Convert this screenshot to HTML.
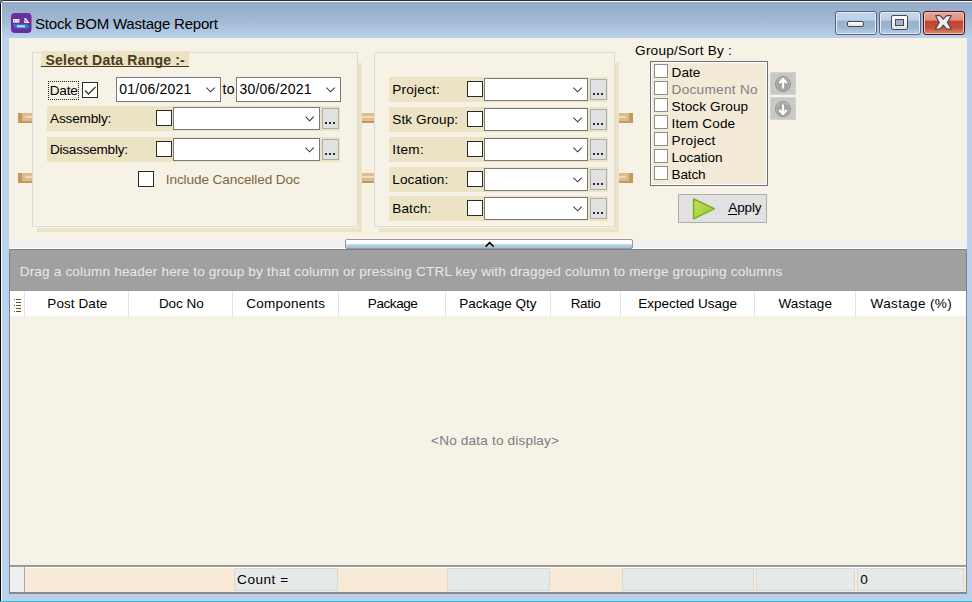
<!DOCTYPE html>
<html><head><meta charset="utf-8">
<style>
*{box-sizing:border-box;margin:0;padding:0}
html,body{width:972px;height:602px;overflow:hidden;background:#b9d1ea;font-family:"Liberation Sans",sans-serif;font-size:13px;color:#000}
.a{position:absolute}
.t{position:absolute;white-space:pre;line-height:1}
</style></head><body>
<div class="a" style="left:0px;top:0px;width:972px;height:602px;background:#b9d1ea;"></div>
<div class="a" style="left:2px;top:2px;width:970px;height:36px;background:linear-gradient(#94abc8 0%,#9fb6d2 45%,#a6bdd8 62%,#b2cae5 85%,#bad2ec 100%);"></div>
<div class="a" style="left:0px;top:0px;width:972px;height:1px;background:#2b2b2b;"></div>
<div class="a" style="left:0px;top:0px;width:1px;height:602px;background:#0c0c0c;"></div>
<div class="a" style="left:1px;top:1px;width:971px;height:1px;background:#f8fbff;"></div>
<div class="a" style="left:1px;top:1px;width:1px;height:601px;background:#f8fbff;"></div>
<div class="a" style="left:0px;top:0px;width:3px;height:3px;background:#6a6a6a;border-bottom-right-radius:3px"></div>
<div class="a" style="left:0px;top:601px;width:972px;height:1px;background:#1ec3dc;"></div>
<svg class="a" style="left:11px;top:13px" width="21" height="20" viewBox="0 0 21 20">
<rect x="0" y="0" width="20.5" height="20" rx="4" fill="#6a2f9a"/>
<rect x="2" y="6" width="3" height="3.6" fill="#f4f0f8"/><rect x="3" y="7" width="1" height="1.6" fill="#9a78c0"/>
<rect x="5" y="6" width="3.4" height="3.6" fill="#f4f0f8"/><rect x="6" y="7" width="1.4" height="1.4" fill="#b8a0d8"/>
<path d="M13.2 10 L13.6 5 L14.8 5 L18.6 10 Z" fill="#f4f0f8"/><path d="M14.3 6.8 L16.4 9 L14.3 9 Z" fill="#8a60b8"/>
<path d="M1.8 11.2 L16.6 11.2 L18.2 15.2 L4.2 15.2 Z" fill="#1f84d6"/>
<rect x="6" y="12.2" width="8" height="2.2" fill="#b9dcf6"/>
</svg>
<div class="t" style="left:35.00px;top:16.30px;font-size:15px;letter-spacing:-0.212px;color:#000;">Stock BOM Wastage Report</div>
<div class="a" style="left:835px;top:11px;width:42px;height:24px;background:linear-gradient(#c3d7ec 0,#bad0e7 38%,#97b1cc 40%,#9db6d0 70%,#b7cee6 100%);border:1px solid #58657f;border-radius:3px;box-shadow:inset 0 0 0 1px #e3ecf6"></div>
<div class="a" style="left:879px;top:11px;width:42px;height:24px;background:linear-gradient(#c3d7ec 0,#bad0e7 38%,#97b1cc 40%,#9db6d0 70%,#b7cee6 100%);border:1px solid #58657f;border-radius:3px;box-shadow:inset 0 0 0 1px #e3ecf6"></div>
<div class="a" style="left:847px;top:21px;width:17px;height:6px;background:linear-gradient(#ffffff,#e4e4e4);border:1px solid #444a5c;border-radius:2px"></div>
<div class="a" style="left:891px;top:15px;width:17px;height:15px;background:linear-gradient(#ffffff,#e4e4e4);border:1px solid #444a5c;border-radius:2px"></div>
<div class="a" style="left:895px;top:19px;width:9px;height:7px;background:#9eb6cf;border:1px solid #444a5c"></div>
<div class="a" style="left:923px;top:11px;width:42px;height:24px;background:linear-gradient(#eaa898 0,#de8e7a 38%,#c0432a 40%,#c54e34 70%,#dc8a75 100%);border:1px solid #4a1222;border-radius:3px;box-shadow:inset 0 0 0 1px #f0c0b0"></div>
<svg class="a" style="left:934px;top:14px" width="20" height="18" viewBox="0 0 20 18">
<path d="M1.6 1.8 Q1.4 1.6 1.9 1.6 L6 1.6 L9.3 5.2 L12.7 1.6 L16.8 1.6 Q17.3 1.6 17.1 1.9 L13.4 8.5 L17.2 14.6 Q17.3 15 16.9 15 L12.7 15 L9.3 11.2 L6 15 L1.8 15 Q1.3 15 1.5 14.6 L5.3 8.5 Z" fill="#ededed" stroke="#39405a" stroke-width="1.1" stroke-linejoin="round"/>
</svg>
<div class="a" style="left:9px;top:38px;width:958px;height:201px;background:#f6f2e6;"></div>
<div class="a" style="left:9px;top:239px;width:958px;height:9px;background:#f0f0f0;"></div>
<div class="a" style="left:9px;top:248px;width:958px;height:1px;background:#fcfcfc;"></div>
<div class="a" style="left:358px;top:63px;width:4px;height:169px;background:#ebe3c4;"></div>
<div class="a" style="left:37px;top:228px;width:325px;height:4px;background:#ebe3c4;"></div>
<div class="a" style="left:32px;top:52px;width:326px;height:175px;background:transparent;border:1px solid #d9dbdf"></div>
<div class="a" style="left:615px;top:63px;width:4px;height:169px;background:#ebe3c4;"></div>
<div class="a" style="left:379px;top:228px;width:240px;height:4px;background:#ebe3c4;"></div>
<div class="a" style="left:374px;top:52px;width:241px;height:175px;background:transparent;border:1px solid #d9dbdf"></div>
<div class="a" style="left:18px;top:113px;width:14px;height:10px;background:#c49a56;"></div>
<div class="a" style="left:22px;top:113px;width:10px;height:8px;background:#dbbb94;"></div>
<div class="a" style="left:25px;top:116px;width:7px;height:2px;background:#ecdcb3;"></div>
<div class="a" style="left:619px;top:113px;width:14px;height:10px;background:#c49a56;"></div>
<div class="a" style="left:619px;top:113px;width:10px;height:8px;background:#dbbb94;"></div>
<div class="a" style="left:619px;top:116px;width:7px;height:2px;background:#ecdcb3;"></div>
<div class="a" style="left:362px;top:113px;width:12px;height:10px;background:#dcbc95;"></div>
<div class="a" style="left:362px;top:116px;width:12px;height:2px;background:#ecdcb3;"></div>
<div class="a" style="left:362px;top:121px;width:12px;height:2px;background:#c49a56;"></div>
<div class="a" style="left:18px;top:173px;width:14px;height:10px;background:#c49a56;"></div>
<div class="a" style="left:22px;top:173px;width:10px;height:8px;background:#dbbb94;"></div>
<div class="a" style="left:25px;top:176px;width:7px;height:2px;background:#ecdcb3;"></div>
<div class="a" style="left:619px;top:173px;width:14px;height:10px;background:#c49a56;"></div>
<div class="a" style="left:619px;top:173px;width:10px;height:8px;background:#dbbb94;"></div>
<div class="a" style="left:619px;top:176px;width:7px;height:2px;background:#ecdcb3;"></div>
<div class="a" style="left:362px;top:173px;width:12px;height:10px;background:#dcbc95;"></div>
<div class="a" style="left:362px;top:176px;width:12px;height:2px;background:#ecdcb3;"></div>
<div class="a" style="left:362px;top:181px;width:12px;height:2px;background:#c49a56;"></div>
<div class="a" style="left:41px;top:51px;width:148px;height:15px;background:#ebe3c4;"></div>
<div class="a" style="left:41px;top:66px;width:148px;height:1px;background:#4a3818;"></div>
<div class="t" style="left:45.50px;top:53.15px;font-size:14px;letter-spacing:0.206px;color:#4a3a1e;font-weight:bold;">Select Data Range :-</div>
<div class="a" style="left:48px;top:81px;width:31px;height:19px;background:transparent;border:1px dotted #222"></div>
<div class="t" style="left:49.70px;top:83.89px;font-size:13.6px;letter-spacing:-0.165px;color:#000;">Date</div>
<div class="a" style="left:82px;top:82px;width:16px;height:16px;background:#fff;border:1px solid #2a2a2a"></div>
<svg class="a" style="left:82px;top:82px" width="16" height="16" viewBox="0 0 16 16"><path d="M3 8.5 L6.5 12 L13.5 5" fill="none" stroke="#3a3a3a" stroke-width="1.4"/></svg>
<div class="a" style="left:116px;top:77px;width:105px;height:25px;background:#fff;border:1px solid #7a7a7a"></div>
<svg class="a" style="left:206px;top:87px" width="10" height="6" viewBox="0 0 10 6"><path d="M0.4 0.6 L4.6 4.8 L8.8 0.6" fill="none" stroke="#3a3a3a" stroke-width="1.05"/></svg>
<div class="t" style="left:119.30px;top:82.15px;font-size:14px;letter-spacing:0.214px;color:#000;">01/06/2021</div>
<div class="t" style="left:222.50px;top:82.15px;font-size:14px;letter-spacing:0.310px;color:#000;">to</div>
<div class="a" style="left:236px;top:77px;width:105px;height:25px;background:#fff;border:1px solid #7a7a7a"></div>
<svg class="a" style="left:326px;top:87px" width="10" height="6" viewBox="0 0 10 6"><path d="M0.4 0.6 L4.6 4.8 L8.8 0.6" fill="none" stroke="#3a3a3a" stroke-width="1.05"/></svg>
<div class="t" style="left:239.50px;top:82.15px;font-size:14px;letter-spacing:0.214px;color:#000;">30/06/2021</div>
<div class="a" style="left:47px;top:106px;width:293px;height:25px;background:#ebe3c4;"></div>
<div class="t" style="left:50.00px;top:112.29px;font-size:13.6px;letter-spacing:-0.175px;color:#000;">Assembly:</div>
<div class="a" style="left:156px;top:110px;width:16px;height:16px;background:#fff;border:1px solid #2a2a2a"></div>
<div class="a" style="left:173px;top:107px;width:147px;height:23px;background:#fff;border:1px solid #7a7a7a"></div>
<svg class="a" style="left:305px;top:116px" width="10" height="6" viewBox="0 0 10 6"><path d="M0.4 0.6 L4.6 4.8 L8.8 0.6" fill="none" stroke="#3a3a3a" stroke-width="1.05"/></svg>
<div class="a" style="left:322px;top:108px;width:17px;height:21px;background:#e1e1e1;border:1px solid #adadad"></div>
<div class="a" style="left:325px;top:122px;width:2px;height:2px;background:#2a2a48;"></div>
<div class="a" style="left:329px;top:122px;width:2px;height:2px;background:#2a2a48;"></div>
<div class="a" style="left:333px;top:122px;width:2px;height:2px;background:#2a2a48;"></div>
<div class="a" style="left:47px;top:137px;width:293px;height:25px;background:#ebe3c4;"></div>
<div class="t" style="left:50.00px;top:143.29px;font-size:13.6px;letter-spacing:-0.259px;color:#000;">Disassembly:</div>
<div class="a" style="left:156px;top:141px;width:16px;height:16px;background:#fff;border:1px solid #2a2a2a"></div>
<div class="a" style="left:173px;top:138px;width:147px;height:23px;background:#fff;border:1px solid #7a7a7a"></div>
<svg class="a" style="left:305px;top:147px" width="10" height="6" viewBox="0 0 10 6"><path d="M0.4 0.6 L4.6 4.8 L8.8 0.6" fill="none" stroke="#3a3a3a" stroke-width="1.05"/></svg>
<div class="a" style="left:322px;top:139px;width:17px;height:21px;background:#e1e1e1;border:1px solid #adadad"></div>
<div class="a" style="left:325px;top:153px;width:2px;height:2px;background:#2a2a48;"></div>
<div class="a" style="left:329px;top:153px;width:2px;height:2px;background:#2a2a48;"></div>
<div class="a" style="left:333px;top:153px;width:2px;height:2px;background:#2a2a48;"></div>
<div class="a" style="left:138px;top:171px;width:16px;height:16px;background:#fff;border:1px solid #2a2a2a"></div>
<div class="t" style="left:165.80px;top:173.19px;font-size:13.6px;letter-spacing:-0.103px;color:#80663f;">Include Cancelled Doc</div>
<div class="a" style="left:389px;top:77px;width:219px;height:25px;background:#ebe3c4;"></div>
<div class="t" style="left:392.30px;top:83.29px;font-size:13.6px;letter-spacing:0.199px;color:#000;">Project:</div>
<div class="a" style="left:467px;top:81px;width:16px;height:16px;background:#fff;border:1px solid #2a2a2a"></div>
<div class="a" style="left:484px;top:78px;width:104px;height:23px;background:#fff;border:1px solid #7a7a7a"></div>
<svg class="a" style="left:573px;top:87px" width="10" height="6" viewBox="0 0 10 6"><path d="M0.4 0.6 L4.6 4.8 L8.8 0.6" fill="none" stroke="#3a3a3a" stroke-width="1.05"/></svg>
<div class="a" style="left:590px;top:79px;width:17px;height:21px;background:#e1e1e1;border:1px solid #adadad"></div>
<div class="a" style="left:593px;top:93px;width:2px;height:2px;background:#2a2a48;"></div>
<div class="a" style="left:597px;top:93px;width:2px;height:2px;background:#2a2a48;"></div>
<div class="a" style="left:601px;top:93px;width:2px;height:2px;background:#2a2a48;"></div>
<div class="a" style="left:389px;top:107px;width:219px;height:25px;background:#ebe3c4;"></div>
<div class="t" style="left:392.30px;top:113.29px;font-size:13.6px;letter-spacing:0.088px;color:#000;">Stk Group:</div>
<div class="a" style="left:467px;top:111px;width:16px;height:16px;background:#fff;border:1px solid #2a2a2a"></div>
<div class="a" style="left:484px;top:108px;width:104px;height:23px;background:#fff;border:1px solid #7a7a7a"></div>
<svg class="a" style="left:573px;top:117px" width="10" height="6" viewBox="0 0 10 6"><path d="M0.4 0.6 L4.6 4.8 L8.8 0.6" fill="none" stroke="#3a3a3a" stroke-width="1.05"/></svg>
<div class="a" style="left:590px;top:109px;width:17px;height:21px;background:#e1e1e1;border:1px solid #adadad"></div>
<div class="a" style="left:593px;top:123px;width:2px;height:2px;background:#2a2a48;"></div>
<div class="a" style="left:597px;top:123px;width:2px;height:2px;background:#2a2a48;"></div>
<div class="a" style="left:601px;top:123px;width:2px;height:2px;background:#2a2a48;"></div>
<div class="a" style="left:389px;top:137px;width:219px;height:25px;background:#ebe3c4;"></div>
<div class="t" style="left:392.30px;top:143.29px;font-size:13.6px;letter-spacing:0.310px;color:#000;">Item:</div>
<div class="a" style="left:467px;top:141px;width:16px;height:16px;background:#fff;border:1px solid #2a2a2a"></div>
<div class="a" style="left:484px;top:138px;width:104px;height:23px;background:#fff;border:1px solid #7a7a7a"></div>
<svg class="a" style="left:573px;top:147px" width="10" height="6" viewBox="0 0 10 6"><path d="M0.4 0.6 L4.6 4.8 L8.8 0.6" fill="none" stroke="#3a3a3a" stroke-width="1.05"/></svg>
<div class="a" style="left:590px;top:139px;width:17px;height:21px;background:#e1e1e1;border:1px solid #adadad"></div>
<div class="a" style="left:593px;top:153px;width:2px;height:2px;background:#2a2a48;"></div>
<div class="a" style="left:597px;top:153px;width:2px;height:2px;background:#2a2a48;"></div>
<div class="a" style="left:601px;top:153px;width:2px;height:2px;background:#2a2a48;"></div>
<div class="a" style="left:389px;top:167px;width:219px;height:25px;background:#ebe3c4;"></div>
<div class="t" style="left:392.30px;top:173.29px;font-size:13.6px;letter-spacing:0.098px;color:#000;">Location:</div>
<div class="a" style="left:467px;top:171px;width:16px;height:16px;background:#fff;border:1px solid #2a2a2a"></div>
<div class="a" style="left:484px;top:168px;width:104px;height:23px;background:#fff;border:1px solid #7a7a7a"></div>
<svg class="a" style="left:573px;top:177px" width="10" height="6" viewBox="0 0 10 6"><path d="M0.4 0.6 L4.6 4.8 L8.8 0.6" fill="none" stroke="#3a3a3a" stroke-width="1.05"/></svg>
<div class="a" style="left:590px;top:169px;width:17px;height:21px;background:#e1e1e1;border:1px solid #adadad"></div>
<div class="a" style="left:593px;top:183px;width:2px;height:2px;background:#2a2a48;"></div>
<div class="a" style="left:597px;top:183px;width:2px;height:2px;background:#2a2a48;"></div>
<div class="a" style="left:601px;top:183px;width:2px;height:2px;background:#2a2a48;"></div>
<div class="a" style="left:389px;top:196px;width:219px;height:25px;background:#ebe3c4;"></div>
<div class="t" style="left:392.30px;top:202.29px;font-size:13.6px;letter-spacing:0.089px;color:#000;">Batch:</div>
<div class="a" style="left:467px;top:200px;width:16px;height:16px;background:#fff;border:1px solid #2a2a2a"></div>
<div class="a" style="left:484px;top:197px;width:104px;height:23px;background:#fff;border:1px solid #7a7a7a"></div>
<svg class="a" style="left:573px;top:206px" width="10" height="6" viewBox="0 0 10 6"><path d="M0.4 0.6 L4.6 4.8 L8.8 0.6" fill="none" stroke="#3a3a3a" stroke-width="1.05"/></svg>
<div class="a" style="left:590px;top:198px;width:17px;height:21px;background:#e1e1e1;border:1px solid #adadad"></div>
<div class="a" style="left:593px;top:212px;width:2px;height:2px;background:#2a2a48;"></div>
<div class="a" style="left:597px;top:212px;width:2px;height:2px;background:#2a2a48;"></div>
<div class="a" style="left:601px;top:212px;width:2px;height:2px;background:#2a2a48;"></div>
<div class="t" style="left:635.10px;top:44.49px;font-size:13.6px;letter-spacing:0.214px;color:#000;">Group/Sort By :</div>
<div class="a" style="left:650px;top:61px;width:118px;height:125px;background:#f3ebd8;border:1px solid #6d707a;box-shadow:inset 1px 1px 0 #fff, inset -1px -1px 0 #fff"></div>
<div class="a" style="left:654px;top:64px;width:14px;height:14px;background:#fff;border:1px solid #8d8d8d"></div>
<div class="t" style="left:671.60px;top:65.79px;font-size:13.6px;letter-spacing:-0.032px;color:#000;">Date</div>
<div class="a" style="left:654px;top:81px;width:14px;height:14px;background:#fff;border:1px solid #8d8d8d"></div>
<div class="t" style="left:671.60px;top:82.79px;font-size:13.6px;letter-spacing:0.284px;color:#80808a;">Document No</div>
<div class="a" style="left:654px;top:98px;width:14px;height:14px;background:#fff;border:1px solid #8d8d8d"></div>
<div class="t" style="left:671.60px;top:99.79px;font-size:13.6px;letter-spacing:0.098px;color:#000;">Stock Group</div>
<div class="a" style="left:654px;top:115px;width:14px;height:14px;background:#fff;border:1px solid #8d8d8d"></div>
<div class="t" style="left:671.60px;top:116.79px;font-size:13.6px;letter-spacing:0.105px;color:#000;">Item Code</div>
<div class="a" style="left:654px;top:132px;width:14px;height:14px;background:#fff;border:1px solid #8d8d8d"></div>
<div class="t" style="left:671.60px;top:133.79px;font-size:13.6px;letter-spacing:0.217px;color:#000;">Project</div>
<div class="a" style="left:654px;top:149px;width:14px;height:14px;background:#fff;border:1px solid #8d8d8d"></div>
<div class="t" style="left:671.60px;top:150.79px;font-size:13.6px;letter-spacing:-0.058px;color:#000;">Location</div>
<div class="a" style="left:654px;top:166px;width:14px;height:14px;background:#fff;border:1px solid #8d8d8d"></div>
<div class="t" style="left:671.60px;top:167.79px;font-size:13.6px;letter-spacing:-0.187px;color:#000;">Batch</div>
<div class="a" style="left:770px;top:72px;width:26px;height:23px;background:#c8c8c8;border:1px solid #d3d3d3"></div>
<svg class="a" style="left:775px;top:76px" width="16" height="16" viewBox="0 0 16 16"><defs><linearGradient id="g72" x1="0" y1="0" x2="0" y2="1"><stop offset="0" stop-color="#c4c4c4"/><stop offset="1" stop-color="#a8a8a8"/></linearGradient></defs><circle cx="8" cy="8" r="7.5" fill="url(#g72)" stroke="#8f8f8f" stroke-width="1"/><circle cx="8" cy="8" r="6" fill="#a2a2a2"/><path d="M8 3.2 L8 12.6 M4.3 7 L8 3.2 L11.7 7" fill="none" stroke="#fff" stroke-width="2.2" stroke-linejoin="miter"/></svg>
<div class="a" style="left:770px;top:97px;width:26px;height:23px;background:#c8c8c8;border:1px solid #d3d3d3"></div>
<svg class="a" style="left:775px;top:101px" width="16" height="16" viewBox="0 0 16 16"><defs><linearGradient id="g97" x1="0" y1="0" x2="0" y2="1"><stop offset="0" stop-color="#c4c4c4"/><stop offset="1" stop-color="#a8a8a8"/></linearGradient></defs><circle cx="8" cy="8" r="7.5" fill="url(#g97)" stroke="#8f8f8f" stroke-width="1"/><circle cx="8" cy="8" r="6" fill="#a2a2a2"/><path d="M8 3.4 L8 12.8 M4.3 9 L8 12.8 L11.7 9" fill="none" stroke="#fff" stroke-width="2.2" stroke-linejoin="miter"/></svg>
<div class="a" style="left:678px;top:194px;width:89px;height:29px;background:#e1e1e1;border:1px solid #adadad"></div>
<svg class="a" style="left:691px;top:196px" width="26" height="26" viewBox="0 0 26 26"><defs><linearGradient id="ga" x1="0" y1="0" x2="1" y2="1"><stop offset="0" stop-color="#bfe25a"/><stop offset="1" stop-color="#9cc834"/></linearGradient></defs><path d="M2.6 3 L23.4 12.7 L2.6 22.8 Z" fill="url(#ga)" stroke="#7fad20" stroke-width="1.5" stroke-linejoin="round"/></svg>
<div class="t" style="left:728.30px;top:201.27px;font-size:13.5px;letter-spacing:-0.113px;color:#000;">Apply</div>
<div class="a" style="left:728px;top:214px;width:9px;height:1px;background:#000;"></div>
<div class="a" style="left:345px;top:239px;width:288px;height:10px;background:linear-gradient(#fff 0,#fff 4px,#c5deee 4px,#a2bdcd 100%);border:1px solid #9a9a9a;border-radius:2px;"></div>
<svg class="a" style="left:485px;top:241px" width="10" height="7" viewBox="0 0 10 7"><path d="M0.6 5.6 L4.6 1.6 L8.6 5.6" fill="none" stroke="#000" stroke-width="1.5"/></svg>
<div class="a" style="left:9px;top:249px;width:958px;height:345px;background:#f6f2e6;border:1px solid #8a8a8a;border-top-color:#7b8089;border-left-color:#7f8590;border-right-color:#7f8590"></div>
<div class="a" style="left:10px;top:250px;width:956px;height:41px;background:#a0a0a0;"></div>
<div class="a" style="left:10px;top:290px;width:956px;height:1px;background:#9a9a9a;"></div>
<div class="t" style="left:19.70px;top:265.09px;font-size:13.6px;letter-spacing:0.164px;color:#e9e9e9;">Drag a column header here to group by that column or pressing CTRL key with dragged column to merge grouping columns</div>
<div class="a" style="left:10px;top:291px;width:956px;height:25px;background:#fff;"></div>
<div class="a" style="left:24px;top:291px;width:1px;height:25px;background:#e3e3e3;"></div>
<div class="a" style="left:128px;top:291px;width:1px;height:25px;background:#e3e3e3;"></div>
<div class="a" style="left:232px;top:291px;width:1px;height:25px;background:#e3e3e3;"></div>
<div class="a" style="left:338px;top:291px;width:1px;height:25px;background:#e3e3e3;"></div>
<div class="a" style="left:445px;top:291px;width:1px;height:25px;background:#e3e3e3;"></div>
<div class="a" style="left:550px;top:291px;width:1px;height:25px;background:#e3e3e3;"></div>
<div class="a" style="left:620px;top:291px;width:1px;height:25px;background:#e3e3e3;"></div>
<div class="a" style="left:754px;top:291px;width:1px;height:25px;background:#e3e3e3;"></div>
<div class="a" style="left:855px;top:291px;width:1px;height:25px;background:#e3e3e3;"></div>
<div class="a" style="left:16px;top:299px;width:5px;height:1px;background:#6b5328;"></div>
<div class="a" style="left:14px;top:299px;width:1px;height:1px;background:#6b5328;"></div>
<div class="a" style="left:16px;top:302px;width:5px;height:1px;background:#6b5328;"></div>
<div class="a" style="left:16px;top:305px;width:5px;height:1px;background:#6b5328;"></div>
<div class="a" style="left:14px;top:305px;width:1px;height:1px;background:#6b5328;"></div>
<div class="a" style="left:16px;top:308px;width:5px;height:1px;background:#6b5328;"></div>
<div class="a" style="left:16px;top:311px;width:5px;height:1px;background:#6b5328;"></div>
<div class="a" style="left:14px;top:311px;width:1px;height:1px;background:#6b5328;"></div>
<div class="t" style="left:47.30px;top:297.17px;font-size:13.5px;letter-spacing:0.092px;color:#000;">Post Date</div>
<div class="t" style="left:158.90px;top:297.17px;font-size:13.5px;letter-spacing:-0.045px;color:#000;">Doc No</div>
<div class="t" style="left:246.30px;top:297.17px;font-size:13.5px;letter-spacing:0.239px;color:#000;">Components</div>
<div class="t" style="left:367.80px;top:297.17px;font-size:13.5px;letter-spacing:-0.419px;color:#000;">Package</div>
<div class="t" style="left:459.30px;top:297.17px;font-size:13.5px;letter-spacing:-0.009px;color:#000;">Package Qty</div>
<div class="t" style="left:570.70px;top:297.17px;font-size:13.5px;letter-spacing:-0.331px;color:#000;">Ratio</div>
<div class="t" style="left:638.30px;top:297.17px;font-size:13.5px;letter-spacing:-0.030px;color:#000;">Expected Usage</div>
<div class="t" style="left:778.50px;top:297.17px;font-size:13.5px;letter-spacing:0.119px;color:#000;">Wastage</div>
<div class="t" style="left:870.60px;top:297.17px;font-size:13.5px;letter-spacing:0.351px;color:#000;">Wastage (%)</div>
<div class="t" style="left:431.10px;top:434.29px;font-size:13.6px;letter-spacing:0.169px;color:#7c7c84;">&lt;No data to display&gt;</div>
<div class="a" style="left:10px;top:565px;width:956px;height:2px;background:linear-gradient(#8c8c8c,#a8a8a8);"></div>
<div class="a" style="left:10px;top:567px;width:956px;height:25px;background:#f8ead6;border-top:1px solid #fff"></div>
<div class="a" style="left:10px;top:567px;width:14px;height:25px;background:#efefef;"></div>
<div class="a" style="left:24px;top:567px;width:1px;height:25px;background:#a8a8a8;"></div>
<div class="a" style="left:234px;top:568px;width:104px;height:23px;background:#e6e9e9;border:1px solid #d6d9d9"></div>
<div class="a" style="left:447px;top:568px;width:103px;height:23px;background:#e6e9e9;border:1px solid #d6d9d9"></div>
<div class="a" style="left:622px;top:568px;width:132px;height:23px;background:#e6e9e9;border:1px solid #d6d9d9"></div>
<div class="a" style="left:756px;top:568px;width:99px;height:23px;background:#e6e9e9;border:1px solid #d6d9d9"></div>
<div class="a" style="left:857px;top:568px;width:107px;height:23px;background:#e6e9e9;border:1px solid #d6d9d9"></div>
<div class="t" style="left:237.10px;top:573.19px;font-size:13.6px;letter-spacing:0.499px;color:#000;">Count =</div>
<div class="t" style="left:860.30px;top:573.19px;font-size:13.6px;letter-spacing:0.000px;color:#000;">0</div>
<div class="a" style="left:9px;top:592px;width:958px;height:2px;background:#8a8a8a;"></div>
</body></html>
